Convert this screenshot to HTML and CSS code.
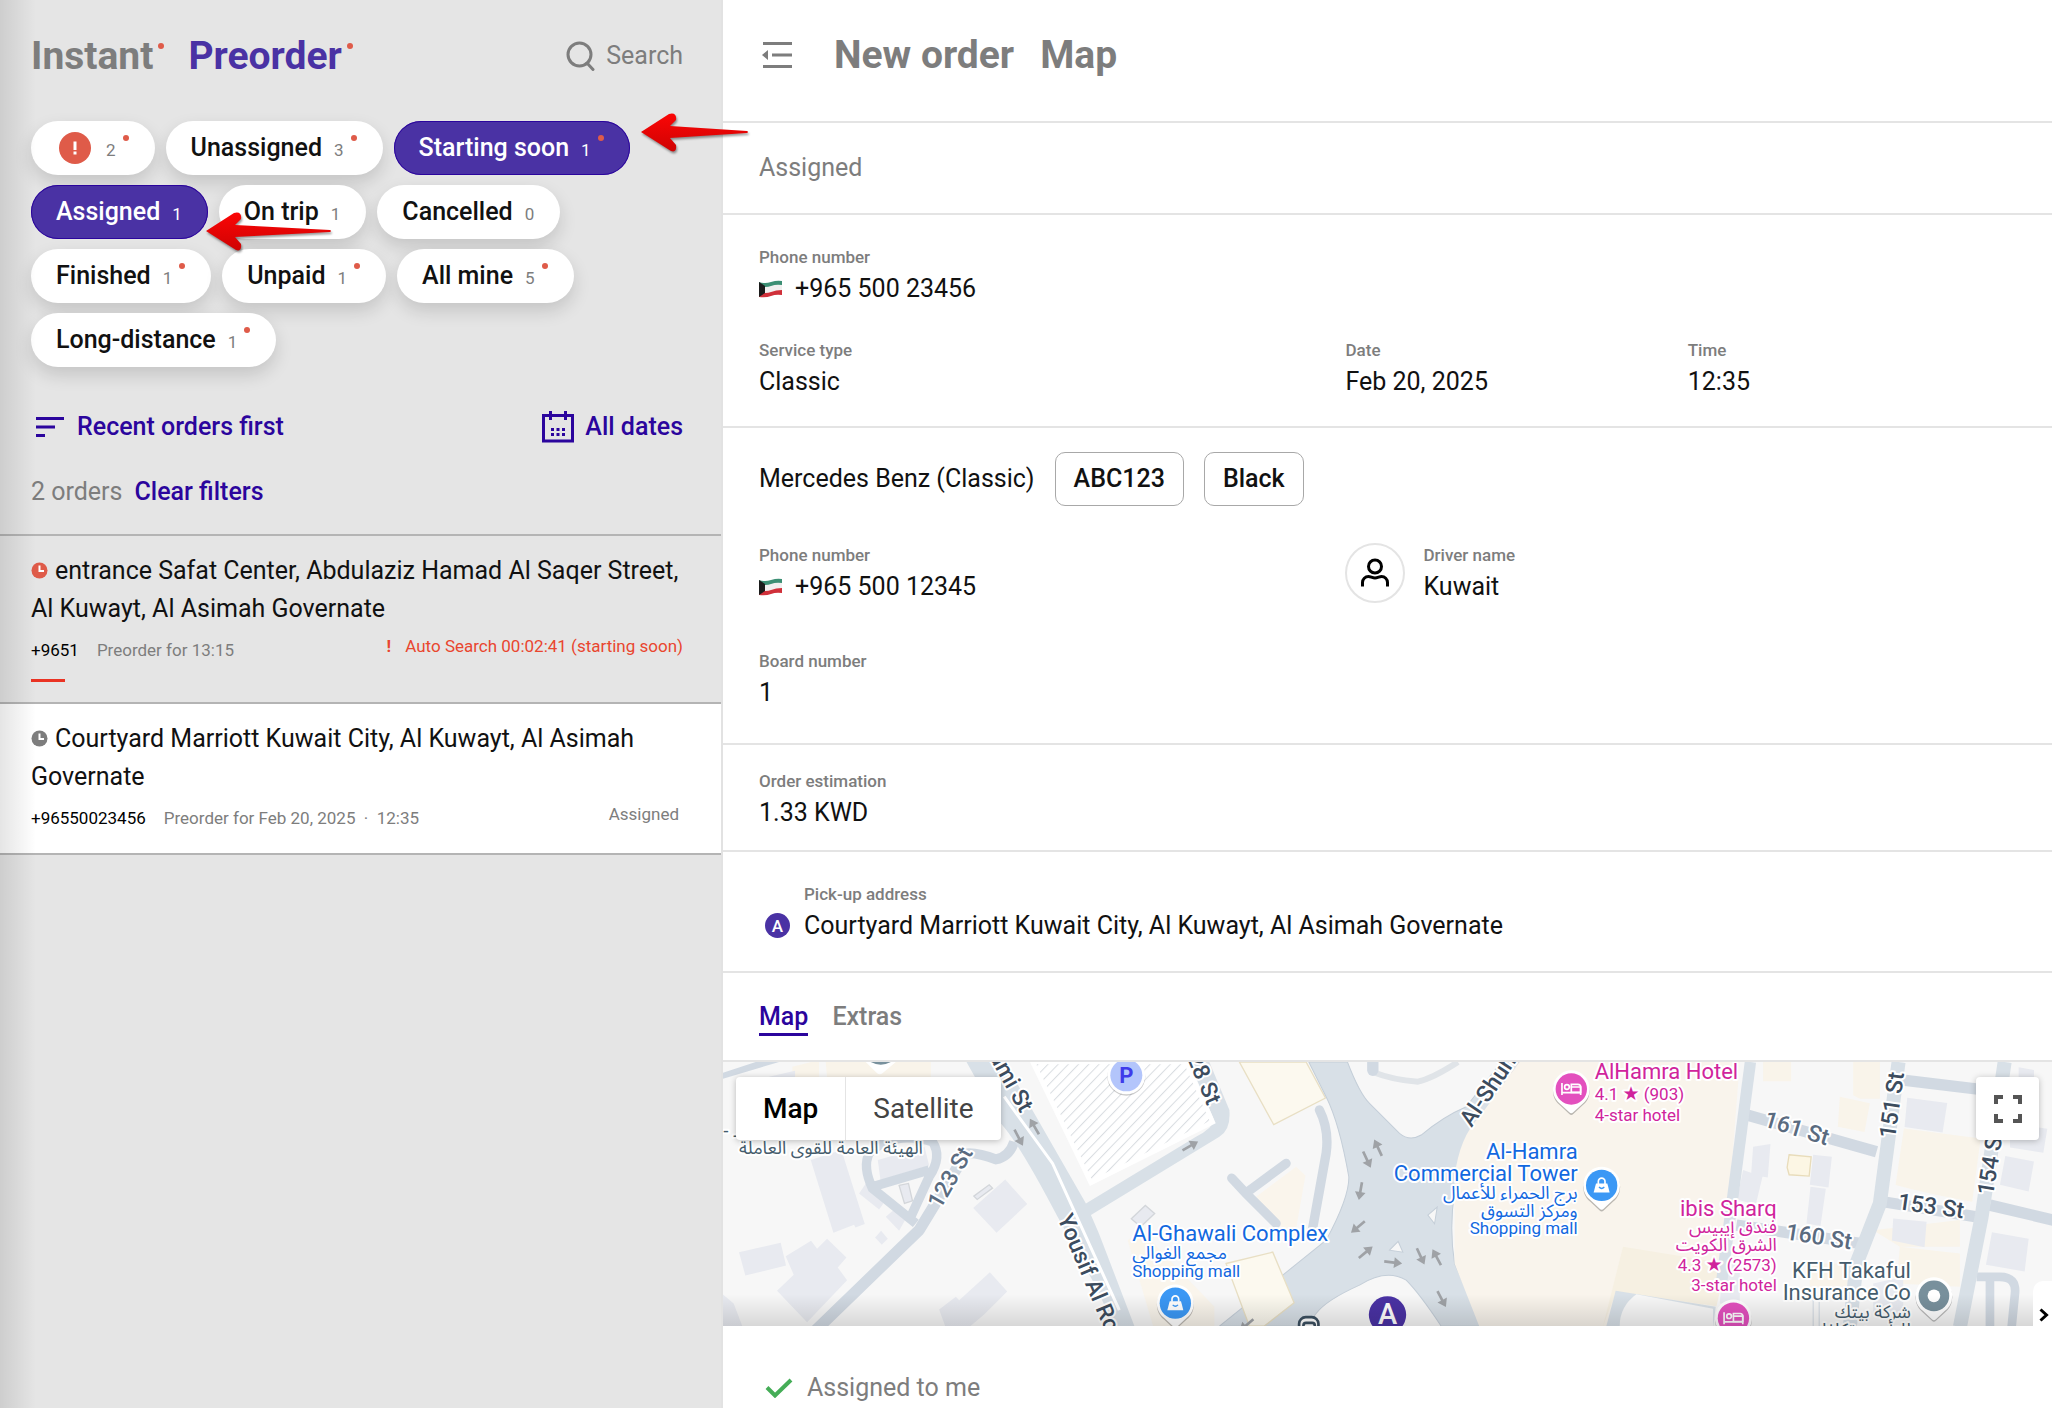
FILE: index.html
```html
<!DOCTYPE html>
<html lang="en">
<head>
<meta charset="utf-8">
<title>Orders</title>
<link rel="stylesheet" href="styles.css">
</head>
<body>
<div class="app">
  <aside class="sidebar">
    <header class="side-head">
      <nav class="modes">
        <a class="mode" href="#instant">Instant<i class="mode-dot"></i></a>
        <a class="mode mode-on" href="#preorder">Preorder<i class="mode-dot"></i></a>
      </nav>
      <button class="search" type="button">
        <svg width="30" height="30" viewBox="0 0 30 30" fill="none" stroke="#7d7d7d" stroke-width="3"><circle cx="13.500" cy="13.500" r="11.500"/><path d="M21 22l6 6.500" stroke-linecap="round"/></svg>
        Search
      </button>
    </header>

    <div class="filters">
      <button class="chip" type="button" aria-label="Problems"><svg class="alert" width="32" height="32" viewBox="0 0 32 32"><circle cx="16" cy="16" r="16" fill="#df5b49"/><path d="M14.500 9.500h3v8.500h-3zM14.500 19.500h3v3h-3z" fill="#fff"/></svg><span class="count">2</span><i class="dot"></i></button>
      <button class="chip" type="button">Unassigned<span class="count">3</span><i class="dot"></i></button>
      <button class="chip chip-on" type="button">Starting soon<span class="count">1</span><i class="dot"></i></button>
      <button class="chip chip-on" type="button">Assigned<span class="count">1</span></button>
      <button class="chip" type="button">On trip<span class="count">1</span></button>
      <button class="chip" type="button">Cancelled<span class="count">0</span></button>
      <button class="chip" type="button">Finished<span class="count">1</span><i class="dot"></i></button>
      <button class="chip" type="button">Unpaid<span class="count">1</span><i class="dot"></i></button>
      <button class="chip" type="button">All mine<span class="count">5</span><i class="dot"></i></button>
      <button class="chip" type="button">Long-distance<span class="count">1</span><i class="dot"></i></button>
    </div>

    <div class="sort-row">
      <button class="link-btn sort" type="button">
        <svg width="28" height="20" viewBox="0 0 28 20" fill="#2b059d"><path d="M0 0h28v3H0zM0 8.500h19v3H0zM0 17h9v3H0z"/></svg>
        Recent orders first
      </button>
      <button class="link-btn dates" type="button">
        <svg width="32" height="32" viewBox="0 0 32 32" fill="none" stroke="#2b059d" stroke-width="3"><path d="M1.500 4.500h29v25.500h-29zM8.500 0v9M23.500 0v9"/><path d="M9 18.500h14M9 23.500h14" stroke-dasharray="3 2.500"/></svg>
        All dates
      </button>
    </div>
    <div class="count-row"><span class="total">2 orders</span><button class="link-btn" type="button">Clear filters</button></div>

    <article class="order">
      <h2 class="address"><svg class="clock" width="17" height="17" viewBox="0 0 17 17"><circle cx="8.500" cy="8.500" r="8" fill="#df5b49"/><path d="M8.500 3.500v5.500h4.500" fill="none" stroke="#fff" stroke-width="2"/></svg>entrance Safat Center, Abdulaziz Hamad Al Saqer Street, Al Kuwayt, Al Asimah Governate</h2>
      <div class="meta"><span class="phone">+9651</span><span>Preorder for 13:15</span><span class="state late"><b class="bang">!</b>Auto Search 00:02:41 (starting soon)</span></div>
      <div class="progress"></div>
    </article>
    <article class="order order-on">
      <h2 class="address"><svg class="clock" width="17" height="17" viewBox="0 0 17 17"><circle cx="8.500" cy="8.500" r="8" fill="#7d7d7d"/><path d="M8.500 3.500v5.500h4.500" fill="none" stroke="#fff" stroke-width="2"/></svg>Courtyard Marriott Kuwait City, Al Kuwayt, Al Asimah Governate</h2>
      <div class="meta"><span class="phone">+96550023456</span><span>Preorder for Feb 20, 2025 &nbsp;·&nbsp; 12:35</span><span class="state">Assigned</span></div>
    </article>
  </aside>

  <main class="main">
    <header class="main-head">
      <button class="icon-btn" type="button" aria-label="Collapse list"><svg width="30" height="26" viewBox="0 0 30 26" fill="#7d7d7d"><path d="M1 0h29v3H1zM10 11.500h20v3H10zM1 23h29v3H1zM0 13l6-5v10z"/></svg></button>
      <a class="main-link" href="#new">New order</a>
      <a class="main-link" href="#map">Map</a>
    </header>

    <section class="row status">Assigned</section>

    <section class="row trip">
      <div class="field"><span class="label">Phone number</span><span class="value"><svg class="flag" width="23" height="18" viewBox="0 0 23 18"><path d="M0 2Q6 4 12 2T23 1V6Q17 5 12 7T0 7z" fill="#3c8f74"/><path d="M0 6Q7 8 12 6T23 5V11Q17 10 12 12T0 13z" fill="#f1efef"/><path d="M0 12Q7 14 12 12T23 10V15Q17 14 12 16T0 17z" fill="#d0303a"/><path d="M0 2l6 4v7l-6 4z" fill="#1b1b1b"/></svg>+965 500 23456</span></div>
      <div class="trip-grid">
        <div class="field"><span class="label">Service type</span><span class="value">Classic</span></div>
        <div class="field"><span class="label">Date</span><span class="value">Feb 20, 2025</span></div>
        <div class="field"><span class="label">Time</span><span class="value">12:35</span></div>
      </div>
    </section>

    <section class="row car">
      <div class="car-line"><span>Mercedes Benz (Classic)</span><span class="tag">ABC123</span><span class="tag">Black</span></div>
      <div class="car-grid">
        <div class="field"><span class="label">Phone number</span><span class="value"><svg class="flag" width="23" height="18" viewBox="0 0 23 18"><path d="M0 2Q6 4 12 2T23 1V6Q17 5 12 7T0 7z" fill="#3c8f74"/><path d="M0 6Q7 8 12 6T23 5V11Q17 10 12 12T0 13z" fill="#f1efef"/><path d="M0 12Q7 14 12 12T23 10V15Q17 14 12 16T0 17z" fill="#d0303a"/><path d="M0 2l6 4v7l-6 4z" fill="#1b1b1b"/></svg>+965 500 12345</span></div>
        <div class="driver">
          <span class="avatar"><svg width="28" height="30" viewBox="0 0 28 30" fill="none" stroke="#000" stroke-width="3"><circle cx="14" cy="8.500" r="6.500"/><path d="M1.500 28.500v-4a6 6 0 0 1 6-6c2 0 4 1.500 6.500 1.500s4.500-1.500 6.500-1.500a6 6 0 0 1 6 6v4"/></svg></span>
          <div class="field"><span class="label">Driver name</span><span class="value">Kuwait</span></div>
        </div>
      </div>
      <div class="field"><span class="label">Board number</span><span class="value">1</span></div>
    </section>

    <section class="row price">
      <div class="field"><span class="label">Order estimation</span><span class="value">1.33 KWD</span></div>
    </section>

    <section class="row pickup">
      <span class="pin-a">A</span>
      <div class="field"><span class="label">Pick-up address</span><span class="value">Courtyard Marriott Kuwait City, Al Kuwayt, Al Asimah Governate</span></div>
    </section>

    <nav class="tabs"><a class="tab tab-on" href="#tab-map">Map</a><a class="tab" href="#tab-extras">Extras</a></nav>

    <div class="map">
      <svg class="map-art" viewBox="0 0 1328 264" preserveAspectRatio="xMinYMin slice">
        <defs>
          <pattern id="hatch" width="22" height="22" patternUnits="userSpaceOnUse" patternTransform="rotate(44)"><rect width="22" height="22" fill="#fff"/><rect width="3" height="22" fill="#d9dde1"/></pattern>
          <g id="arrow"><path d="M-4 26V-4h-12L0-28L16-4H4V26z" fill="#9fa2a6"/></g>
          <g id="pin"><path d="M0-56a56 56 0 0 1 34 100L6 70Q0 76-6 70L-34 44A56 56 0 0 1 0-56z" fill="#000" opacity=".25" transform="translate(0 5)"/><path d="M0-56a56 56 0 0 1 34 100L6 70Q0 76-6 70L-34 44A56 56 0 0 1 0-56z" fill="#fff"/></g>
          <g id="bag"><use href="#pin"/><circle r="47" fill="#3b98f5"/><path d="M-17-6h34l7 27h-48z" fill="#fff"/><path d="M-10-4v-8a10 10 0 0 1 20 0v8" fill="none" stroke="#fff" stroke-width="5"/><path d="M-8 5q8 8 16 0" fill="none" stroke="#3b98f5" stroke-width="4"/></g>
          <g id="bed"><use href="#pin"/><circle r="47" fill="#e350be"/><path d="M-28-18v36M-28 11h56M28 18v-24h-30" fill="none" stroke="#fff" stroke-width="5"/><path d="M0-14h20a8 8 0 0 1 8 8v16H0z" fill="none" stroke="#fff" stroke-width="5"/><circle cx="-13" cy="-6" r="7" fill="none" stroke="#fff" stroke-width="5"/></g>
          <linearGradient id="fade" x1="0" y1="0" x2="0" y2="1"><stop offset="0" stop-color="#000" stop-opacity="0"/><stop offset="1" stop-color="#000" stop-opacity=".13"/></linearGradient>
        </defs>
        <g transform="scale(.333333)">
          <rect width="6000" height="1200" fill="#f7f7f7"/>

          <g transform="translate(-12 -336)">
            <path d="M320 336h315v60H325zM220 350l80-20v55h-80z" fill="#f9f4ea"/>
            <path d="M0 372L110 336h70L0 390z" fill="#d1d9e2"/>
            <g fill="#e8eaf0">
              <path d="M150 380l78-18v40h-78zM275 630l92-30 70 222-28 10-4-8-62 24zM60 906l125-28 16 68-122 30zM200 918l76-46 18 24 30-30 58 56-26 30 28 38-120 126-90-94 50-48zM762 774l96-86 66 74-92 86zM660 1078l50-38 10 10 92-84 52 58-70 70-60 50h-50zM476 630l140-40 14 56-146 44zM8 1030l36 30 26 68H8zM500 800l28-24 32 30-20 36zM468 862l18-20 20 24-18 18zM420 730l20-30 60 50-20 28z"/>
              <path d="M540 706l28-6 12 52-24 8zM764 738l46-34 10 10-46 34zM1236 806l42-40 28 24-42 40z" stroke="#d3d6da" stroke-width="4"/>
            </g>
            <g fill="none" stroke="#d1d9e2" stroke-linejoin="round">
              <path d="M290 1140L600 840L740 610" stroke-width="34"/>
              <path d="M590 820L460 715Q430 650 450 610Q520 540 640 575Q670 620 630 680L575 800M460 710L630 660" stroke-width="28"/>
              <path d="M720 614Q760 600 830 628Q870 620 885 575" stroke-width="30"/>
            </g>
            <path d="M1225 870l40-30 220 230v70h-180z" fill="#faf5ec"/>
            <path d="M742 336h115L1100 760L1430 560Q1480 535 1484 510L1410 336h60L1530 480Q1535 540 1500 560L1115 795Q1140 850 1160 905L1250 1140H1190L1130 1010L1015 800Q900 580 845 520z" fill="#d8e0e7"/>
            <path d="M855 440L1000 640L1200 1080" stroke="#fff" stroke-width="9" fill="none"/>
            <path d="M940 336h460l80 180L1115 698z" fill="url(#hatch)" stroke="#fff" stroke-width="14"/>
          </g>

          <g transform="translate(1008 -36)">
            <path d="M540 36h200l58 108-155 80z" fill="#fcf9ef" stroke="#e8dfc4" stroke-width="4"/>
            <path d="M590 440l120-90 28 26-28 160h-40z" fill="#faf5ec"/>
            <path d="M748 36h116Q900 130 930 160L1020 250Q1050 275 1085 255Q1150 200 1220 170L1325 36h120L1210 320Q1160 480 1185 640L1270 828h-125Q1080 730 1040 690Q980 655 900 705Q800 750 770 790L740 828H480L800 570Q870 440 868 380Q840 220 800 140z" fill="#d8e0e7" stroke="#c4ced8" stroke-width="3"/>
            <path d="M500 640l140-34 64 152-90 70h-44z" fill="#fcf9ef" stroke="#e8dfc4" stroke-width="4"/>
            <path d="M780 180Q810 240 800 310L755 560M680 340L565 425M517 384L560 430L650 520" fill="none" stroke="#d1d9e2" stroke-width="28" stroke-linecap="round"/>
            <path d="M940 36v30Q1000 90 1075 95Q1120 85 1195 36" fill="none" stroke="#e0e4e8" stroke-width="18"/>
            <path d="M940 36v25" stroke="#d1d9e2" stroke-width="34" stroke-linecap="round"/>
            <path d="M1380 36h660l-40 520-100 300h-630L1185 640V380Q1200 260 1260 200z" fill="#f9f4ec"/>
            <path d="M1105 495l28-24-8 50zM990 600l26-26 14 32z" fill="#f7f7f7" stroke="#c4ced8" stroke-width="3"/>
            <use href="#arrow" transform="translate(392 288) rotate(60)"/>
            <use href="#arrow" transform="translate(956 294) rotate(-25)"/>
            <use href="#arrow" transform="translate(922 328) rotate(155)"/>
            <use href="#arrow" transform="translate(903 422) rotate(190)"/>
            <use href="#arrow" transform="translate(896 530) rotate(230)"/>
            <use href="#arrow" transform="translate(918 607) rotate(50)"/>
            <use href="#arrow" transform="translate(1000 637) rotate(97)"/>
            <use href="#arrow" transform="translate(1083 618) rotate(155)"/>
            <use href="#arrow" transform="translate(1132 622) rotate(-28)"/>
            <use href="#arrow" transform="translate(1146 746) rotate(152)"/>
            <use href="#arrow" transform="translate(562 824) rotate(230)"/>
            <use href="#arrow" transform="translate(-74 230) rotate(-30)"/>
            <use href="#arrow" transform="translate(-122 262) rotate(152)"/>
          </g>

          <g transform="translate(2448 -36)">
            <path d="M610 36h1000v800H515L560 560L620 180z" fill="#f7f7f7"/>
            <path d="M190 828L250 590L560 640L530 768L230 724z" fill="#f6f0e2"/>
            <path d="M200 828l28-106 300 48-8 60z" fill="#d8e0e7"/>
            <path d="M240 828q0-60 50-96l230 44v60z" fill="#f7f7f7"/>
            <path d="M670 36h84v58h-84zM940 36h80v110h-60l-20-10zM900 140l90 20-16 86-80-16zM1092 235l230 30-25 190q-120-20-230-50zM1000 540l260-30v80h-180zM1070 700l10-110 180 20v100zM810 640h130v70H810z" fill="#f9f4ea"/>
            <g fill="#e8eaf0">
              <path d="M1102 143l120 16-14 88-114-16zM640 290l52-8-8 100-50-8zM610 360l58 20-20 84-56-16zM820 314l56 6-10 92-56-8zM812 410l46 6-16 112-42-8zM1060 505l100 10-6 76-98-20zM1396 318l86 16-16 90-86-20zM1356 546l110 20-12 98-116-20zM1410 220l112 16-12 72-100-16zM1000 700l90-20v110h-90zM550 640h50v120h-60zM1436 52l46 8v30h-46z"/>
            </g>
            <path d="M748 314l66 6-6 58-60-4-6-22z" fill="#fcf6e4" stroke="#e8dcba" stroke-width="4"/>
            <g fill="none" stroke="#d1d9e2">
              <path d="M622 195L1010 305M1090 90L1320 118M1350 465L1540 510M590 525L960 580M1030 455L1310 500" stroke-width="34"/>
              <path d="M1310 680h70q50 0 45 50l-10 100M1350 690v150" stroke-width="26"/>
              <path d="M820 740v90M838 740v90" stroke-width="3"/>
              <path d="M632 36L545 700" stroke="#d8e0e7" stroke-width="34"/>
              <path d="M1076 36L1020 460L950 640L930 830M1394 36L1325 500L1260 830" stroke="#d8e0e7" stroke-width="42"/>
            </g>
          </g>

          <g transform="translate(-12 -336)">
            <path d="M440 336h90l-40 34q-8 6-16 0z" fill="#fff"/><path d="M455 336h60q-30 16-60 0z" fill="#78909c"/>
            <circle cx="1221" cy="380" r="57" fill="#000" opacity=".2"/><circle cx="1221" cy="376" r="57" fill="#fff"/><circle cx="1221" cy="376" r="48" fill="#b3c5fb"/>
          </g>
          <use href="#bag" x="1356" y="723"/>
          <use href="#bag" x="2634" y="370"/>
          <use href="#bed" x="2543" y="81"/>
          <use href="#bed" x="3029" y="768"/>
          <use href="#pin" x="3630" y="701"/><circle cx="3630" cy="701" r="46" fill="#78909c"/><circle cx="3630" cy="701" r="19" fill="#fff"/>
          <circle cx="1992" cy="758" r="56" fill="#4a32a4"/>
          <rect x="1727" y="765" width="58" height="60" rx="20" fill="#fff" stroke="#3b4f60" stroke-width="8"/><path d="M1740 800v-10q0-8 8-8h18q8 0 8 8v10z" fill="none" stroke="#3b4f60" stroke-width="8"/>
        </g>

        <g class="poi blue">
          <text x="409" y="179">Al-Ghawali Complex</text><text class="ar" x="409" y="197">مجمع الغوالي</text><text class="sub" x="409" y="215">Shopping mall</text>
          <g text-anchor="end"><text x="854" y="97">Al-Hamra</text><text x="854" y="119">Commercial Tower</text></g>
          <g text-anchor="end"><text class="ar" x="854" y="137">برج الحمراء للأعمال</text><text class="ar" x="854" y="155">ومركز التسوق</text><text class="sub" x="854" y="172">Shopping mall</text></g>
        </g>
        <g class="poi pink">
          <text x="871" y="17">AlHamra Hotel</text><text class="sub" x="871" y="38">4.1 <tspan class="star">★</tspan> (903)</text><text class="sub" x="871" y="59">4-star hotel</text>
          <g text-anchor="end"><text x="1053" y="154">ibis Sharq</text><text class="ar" x="1053" y="171">فندق إيبيس</text><text class="ar" x="1053" y="189">الشرق الكويت</text><text class="sub" x="1053" y="209">4.3 <tspan class="star">★</tspan> (2573)</text><text class="sub" x="1053" y="229">3-star hotel</text></g>
        </g>
        <g class="poi slate">
          <g text-anchor="end"><text x="1187" y="216">KFH Takaful</text><text x="1187" y="238">Insurance Co</text><text class="ar" x="1187" y="256">شركة بيتك</text><text class="ar" x="1187" y="274">للتأمين تكافل</text></g>
          <text class="ar" x="0" y="75">- مـ</text><text class="ar" x="16" y="92">الهيئة العامة للقوى العاملة</text>
        </g>
        <g class="street">
          <text transform="translate(252 -30) rotate(61)">Roumi St</text>
          <text transform="translate(334 156) rotate(67)">Yousif Al Roumi St</text>
          <text transform="translate(458 -17) rotate(67)">128 St</text>
          <text transform="translate(748 66) rotate(-56)">Al-Shuhada</text>
          <text transform="translate(1171 77) rotate(-82)">151 St</text>
          <text transform="translate(1269 134) rotate(-81)">154 St</text>
          <text transform="translate(1173 147) rotate(8)">153 St</text>
          <g class="minor"><text transform="translate(217 148) rotate(-60)">123 St</text><text transform="translate(1039 64) rotate(17)">161 St</text><text transform="translate(1061 177) rotate(9)">160 St</text></g>
        </g>
        <text class="letter p" x="403" y="21" text-anchor="middle">P</text>
        <text class="letter a" x="664" y="262" text-anchor="middle">A</text>
        <rect y="232" width="2400" height="32" fill="url(#fade)"/>
      </svg>
      <div class="map-type"><button class="type type-on" type="button">Map</button><button class="type" type="button">Satellite</button></div>
      <button class="fullscreen" type="button" aria-label="Full screen"><svg width="28" height="28" viewBox="0 0 28 28" fill="none" stroke="#555" stroke-width="4"><path d="M2 9V2h7M19 2h7v7M26 19v7h-7M9 26H2v-7"/></svg></button>
      <button class="next" type="button" aria-label="Next"><svg width="10" height="14" viewBox="0 0 10 14" fill="none" stroke="#000" stroke-width="3"><path d="M1.500 1.500L7.500 7l-6 5.500"/></svg></button>
    </div>

    <footer class="foot"><svg width="28" height="20" viewBox="0 0 28 20" fill="none" stroke="#45ad57" stroke-width="4"><path d="M2 9.500l8 8L26 2"/></svg>Assigned to me</footer>
  </main>

  <svg class="callout callout-a" width="108" height="40" viewBox="0 0 108 40">
    <defs><linearGradient id="red" x1="0" y1="0" x2="0" y2="1"><stop offset="0" stop-color="#fb0606"/><stop offset="1" stop-color="#cf0303"/></linearGradient></defs>
    <path d="M0 19L28 1Q36-1 35 7L29 13L106 18Q108 19 106 20L29 25L35 32Q36 40 30 38z" fill="url(#red)"/>
  </svg>
  <svg class="callout callout-b" width="126" height="40" viewBox="0 0 126 40"><path d="M0 19L28 1Q36-1 35 7L29 13L124 18Q126 19 124 20L29 25L35 32Q36 40 30 38z" fill="url(#red)"/></svg>
</div>
</body>
</html>
```
FILE: styles.css
```css
* { box-sizing: border-box; }
body { margin: 0; font-family: Roboto, "Liberation Sans", sans-serif; font-size: 25px; line-height: 32px; color: #111; }
button { font: inherit; color: inherit; background: none; border: 0; padding: 0; margin: 0; }
a { color: inherit; text-decoration: none; }
h2 { margin: 0; font: inherit; }
svg { flex: none; display: block; }

.app { position: relative; display: flex; height: 100vh; overflow: hidden; }

.sidebar { position: relative; width: 723px; flex: none; background: #e5e5e5; border-right: 2px solid #e2e2e2; }
.sidebar::before { content: ""; position: absolute; inset: 0 auto 0 0; width: 36px; background: linear-gradient(to right, rgba(0,0,0,.1), rgba(0,0,0,0)); pointer-events: none; z-index: 1; }
.side-head { display: flex; justify-content: space-between; align-items: center; height: 112px; padding: 0 38px 0 31px; }
.modes { display: flex; gap: 24px; font-size: 39px; font-weight: 700; color: #7d7d7d; }
.mode { display: flex; }
.mode-on { color: #4a32a4; }
.mode-dot { width: 6px; height: 6px; margin: 3px 0 0 5px; border-radius: 50%; background: #df5b49; }
.search { display: flex; align-items: center; gap: 10px; color: #7d7d7d; }

.filters { display: flex; flex-wrap: wrap; gap: 10px 11px; padding: 9px 31px 0; }
.chip { display: flex; align-items: center; height: 54px; padding: 0 26px 0 25px; border-radius: 27px; background: #fff; font-weight: 500; box-shadow: 0 8px 18px rgba(0,0,0,.14); }
.chip-on { background: #4a32a4; color: #fff; box-shadow: inset 0 0 0 1px #2b059d; }
.alert { margin: 0 3px; }
.count { margin: 4px 0 0 12px; font-size: 17px; font-weight: 400; color: #7d7d7d; }
.chip-on .count { color: #fff; }
.dot { width: 6px; height: 6px; margin: 0 0 20px 7px; border-radius: 50%; background: #df5b49; }

.sort-row { display: flex; justify-content: space-between; align-items: center; padding: 44px 38px 0 36px; }
.link-btn { display: flex; align-items: center; color: #2b059d; font-weight: 500; }
.sort { gap: 13px; }
.dates { gap: 11px; }
.count-row { display: flex; gap: 12px; padding: 33px 31px 26px; color: #7d7d7d; }

.order { border-top: 2px solid #b4b4b4; padding: 16px 38px 20px 31px; }
.order-on { background: #fff; border-bottom: 2px solid #b4b4b4; padding-bottom: 23px; }
.address { line-height: 38px; }
.clock { display: inline-block; margin-right: 7px; }
.meta { display: flex; gap: 18px; padding-top: 10px; font-size: 17px; line-height: 24px; color: #7d7d7d; }
.phone { color: #000; }
.state { margin: -4px 4px 0 auto; }
.late { margin-right: 0; color: #e9462f; }
.bang { margin-right: 14px; }
.progress { width: 34px; height: 3px; margin-top: 17px; background: #ea3323; }

.main { flex: 1; min-width: 0; display: flex; flex-direction: column; background: #fff; }
.main-head { display: flex; align-items: center; height: 123px; padding: 0 36px 12px 39px; gap: 26px; border-bottom: 2px solid #e4e4e4; font-size: 39px; font-weight: 700; color: #7d7d7d; }
.icon-btn { margin-right: 16px; }
.row { padding: 0 36px; border-bottom: 2px solid #e4e4e4; }
.field { display: flex; flex-direction: column; }
.label { font-size: 17px; line-height: 24px; font-weight: 500; color: #7d7d7d; }
.value { display: flex; align-items: center; margin-top: 4px; }
.flag { margin-right: 13px; }
.status { padding: 29px 36px; color: #7d7d7d; }
.trip { padding-top: 30px; padding-bottom: 28px; }
.trip-grid { display: grid; grid-template-columns: 586fr 342fr 328fr; margin-top: 33px; }
.car { padding-top: 24px; padding-bottom: 34px; }
.car-line { display: flex; align-items: center; gap: 20px; }
.tag { height: 54px; padding: 10px 18px; border: 1px solid #a8a8a8; border-radius: 10px; font-weight: 500; }
.car-grid { display: grid; grid-template-columns: 586fr 670fr; margin: 37px 0 46px; }
.driver { display: flex; gap: 18px; }
.avatar { display: grid; place-items: center; width: 60px; height: 60px; border: 2px solid #e4e4e4; border-radius: 50%; }
.price { padding-top: 24px; padding-bottom: 21px; }
.pickup { display: flex; align-items: flex-end; gap: 14px; padding-top: 30px; padding-bottom: 29px; }
.pin-a { width: 25px; height: 25px; margin: 0 0 4px 6px; border-radius: 50%; background: #4a32a4; color: #fff; font-size: 17px; line-height: 26px; font-weight: 500; text-align: center; }
.tabs { display: flex; gap: 24px; height: 89px; padding: 28px 36px 0; border-bottom: 2px solid #e4e4e4; font-weight: 500; color: #7d7d7d; }
.tab { height: 35px; }
.tab-on { color: #2b059d; border-bottom: 3px solid #2b059d; }

.map { position: relative; flex: 1; min-height: 0; overflow: hidden; }
.map-art { width: 100%; height: 100%; }
.map-type { position: absolute; left: 13px; top: 15px; display: flex; height: 63px; background: #fff; border-radius: 4px; box-shadow: 0 1px 6px rgba(0,0,0,.25); font-size: 28px; color: #444; }
.type { padding: 0 27px; }
.type-on { font-weight: 500; color: #000; border-right: 1px solid #e4e4e4; }
.fullscreen { position: absolute; right: 13px; top: 15px; display: grid; place-items: center; width: 63px; height: 63px; background: #fff; border-radius: 4px; box-shadow: 0 1px 6px rgba(0,0,0,.25); }
.next { position: absolute; right: 0; bottom: 0; display: grid; place-items: end; width: 19px; height: 45px; padding: 0 3px 4px 0; background: #fff; border-radius: 10px 0 0 0; }
.poi, .street { font-size: 22px; stroke: #fff; stroke-width: 4px; paint-order: stroke; stroke-linejoin: round; }
.sub { font-size: 17px; }
.ar { font-family: "Noto Sans Arabic", "DejaVu Sans", sans-serif; font-size: 18px; }
.star { font-family: "DejaVu Sans", sans-serif; font-size: 19px; }
.blue { fill: #1268e0; }
.pink { fill: #d0249c; }
.slate { fill: #455c6c; }
.street { font-size: 23px; font-weight: 500; fill: #3c4c5e; }
.minor { fill: #5a6b80; }
.letter { font-weight: 700; }
.p { font-size: 22px; fill: #3f3bea; }
.a { font-size: 29px; font-weight: 500; fill: #fff; }

.foot { display: flex; align-items: center; gap: 14px; height: 82px; padding: 41px 42px 0; line-height: 40px; color: #7d7d7d; }

.callout { position: absolute; z-index: 2; filter: drop-shadow(1px 2px 1px rgba(0,0,0,.4)); }
.callout-a { left: 641px; top: 113px; }
.callout-b { left: 206px; top: 212px; }
```
